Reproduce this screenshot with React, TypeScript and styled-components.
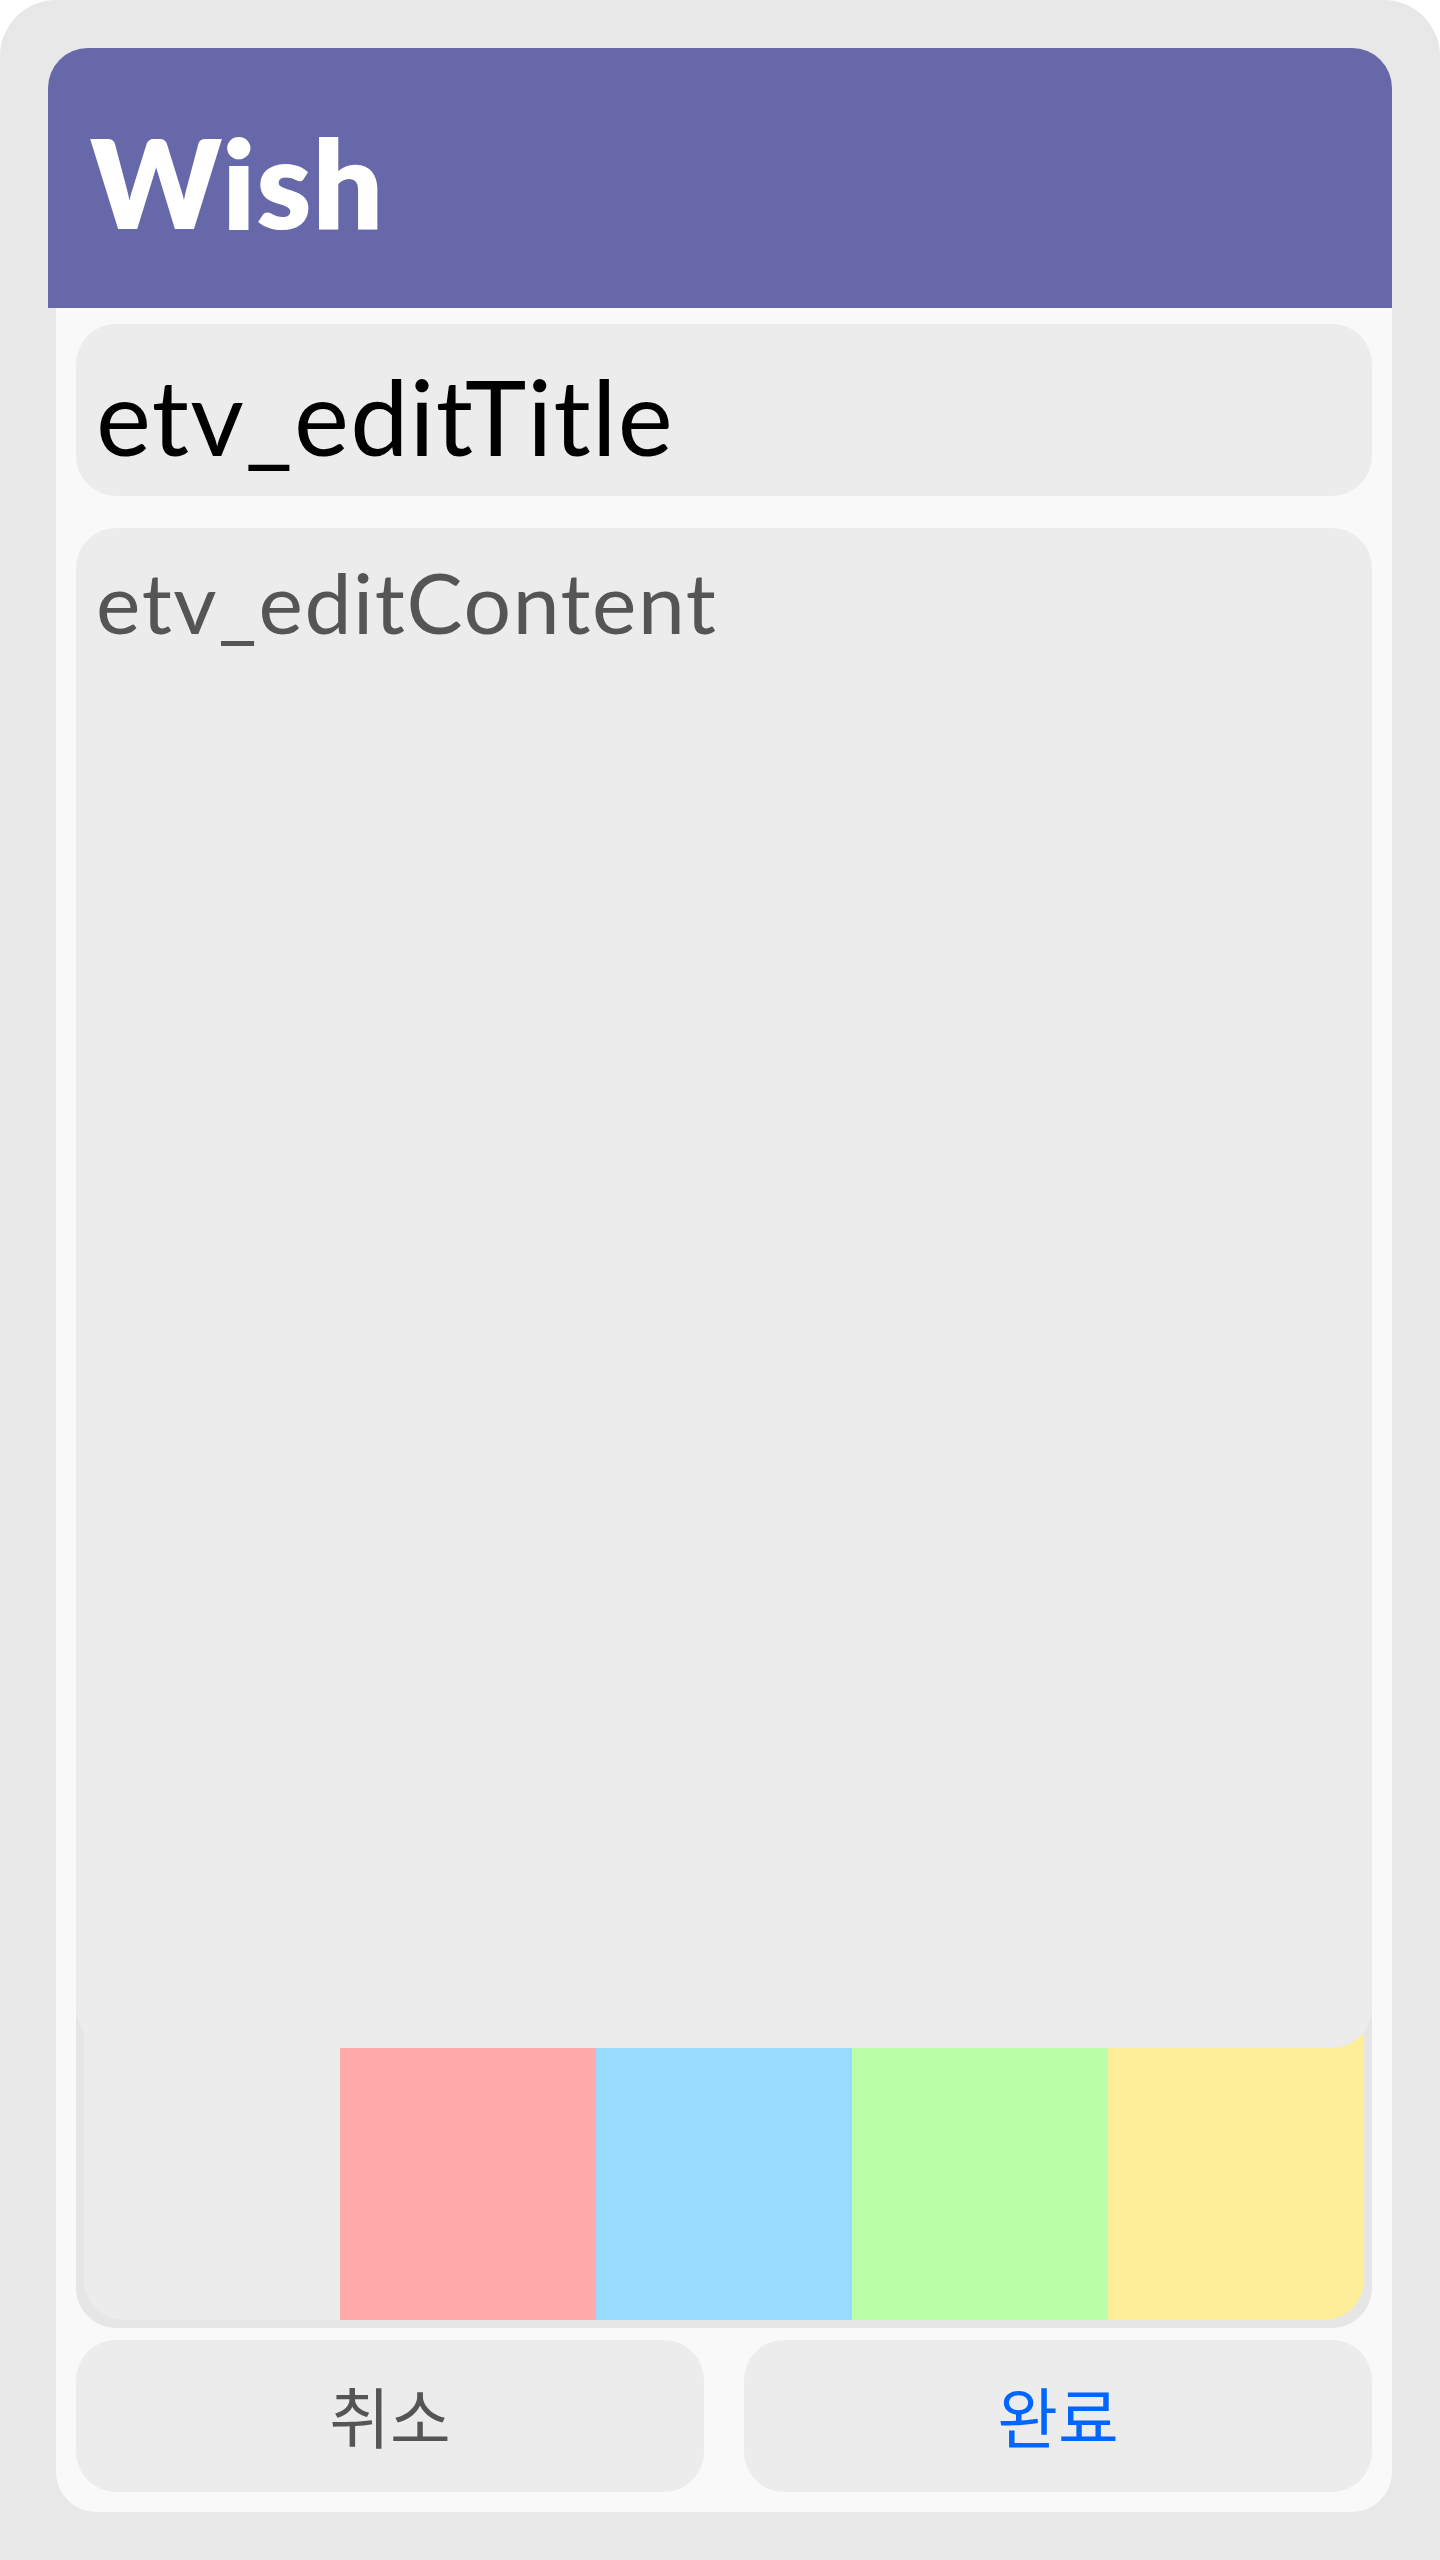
import React from "react";
import styled, { createGlobalStyle } from "styled-components";

const GlobalStyle = createGlobalStyle`
  html, body {
    margin: 0;
    padding: 0;
    background: #ffffff;
  }
  * { box-sizing: border-box; }
`;

const LATIN = `"Lato", "Noto Sans", sans-serif`;
const KOREAN = `"Noto Sans CJK KR", "Noto Sans", sans-serif`;

const Screen = styled.div`
  width: 1440px;
  min-height: 2560px;
  background: #e8e8e8;
  border-radius: 56px 56px 0 0;
  padding: 48px 48px 48px 48px;
  display: flex;
  flex-direction: column;
`;

const Header = styled.header`
  height: 260px;
  background: #6768a9;
  border-radius: 40px 40px 0 0;
  display: flex;
  align-items: center;
  padding: 6px 0 0 42px;
`;

const HeaderTitle = styled.h1`
  margin: 0;
  font-family: ${LATIN};
  font-weight: 800;
  font-size: 124px;
  letter-spacing: 1px;
  line-height: 1;
  color: #ffffff;
`;

const Panel = styled.main`
  flex: 1;
  margin-left: 8px;
  background: #f9f9f9;
  border-radius: 0 0 40px 40px;
  padding: 16px 20px 20px 20px;
  display: flex;
  flex-direction: column;
`;

const Field = styled.div`
  position: relative;
  z-index: 1;
  background: #ececec;
  border-radius: 40px;
  padding: 0 20px;
  font-family: ${LATIN};
`;

const TitleField = styled(Field)`
  height: 172px;
  display: flex;
  align-items: center;
  font-size: 104px;
  letter-spacing: 1.2px;
  color: #000000;
  padding-top: 10px;
`;

const ContentField = styled(Field)`
  margin-top: 32px;
  height: 1520px;
  font-size: 84px;
  letter-spacing: 1.6px;
  color: #555555;
  padding-top: 24px;
  line-height: 1.2;
`;

const Palette = styled.div`
  margin-top: -80px;
  height: 360px;
  padding: 8px;
  background: #e6e6e6;
  border-radius: 40px;
`;

const PaletteInner = styled.div`
  height: 100%;
  background: #ececec;
  border-radius: 40px;
  overflow: hidden;
  display: flex;
  padding-left: 256px;
`;

const Swatch = styled.div<{ $color: string }>`
  width: 256px;
  height: 100%;
  background: ${(p) => p.$color};
`;

const ButtonRow = styled.div`
  margin-top: 12px;
  display: grid;
  grid-template-columns: 1fr 1fr;
  gap: 40px;
`;

const ActionButton = styled.button<{ $primary?: boolean }>`
  height: 152px;
  border: none;
  border-radius: 40px;
  background: #ececec;
  font-family: ${KOREAN};
  font-size: 66px;
  line-height: 1;
  color: ${(p) => (p.$primary ? "#0066ff" : "#555555")};
  display: flex;
  align-items: center;
  justify-content: center;
  padding: 0 0 4px 0;
  cursor: pointer;
`;

const colors = ["#ffaaaa", "#99daff", "#bbffaa", "#feed99"];

export default function App() {
  return (
    <>
      <GlobalStyle />
      <Screen>
        <Header>
          <HeaderTitle>Wish</HeaderTitle>
        </Header>
        <Panel>
          <TitleField>etv_editTitle</TitleField>
          <ContentField>etv_editContent</ContentField>
          <Palette>
            <PaletteInner>
              {colors.map((c) => (
                <Swatch key={c} $color={c} />
              ))}
            </PaletteInner>
          </Palette>
          <ButtonRow>
            <ActionButton>취소</ActionButton>
            <ActionButton $primary>완료</ActionButton>
          </ButtonRow>
        </Panel>
      </Screen>
    </>
  );
}
